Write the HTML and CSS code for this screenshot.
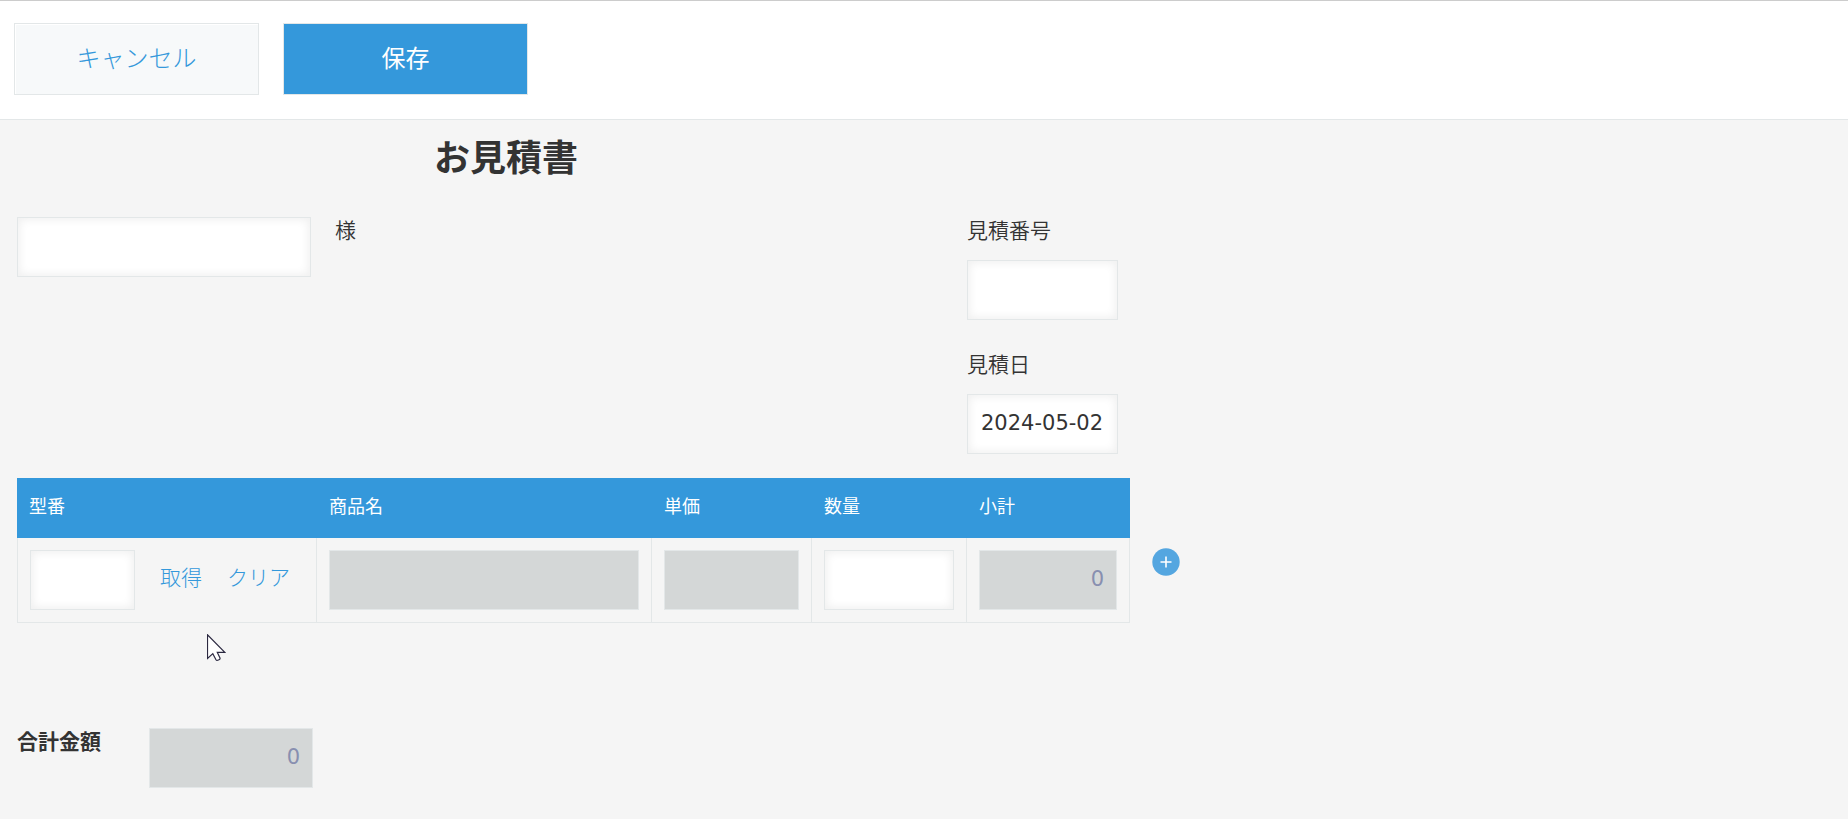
FILE: index.html
```html
<!DOCTYPE html>
<html lang="ja">
<head>
    <meta charset="UTF-8">
    <meta name="viewport" content="width=device-width, initial-scale=1.0">
    <title>お見積書</title>
    <link rel="stylesheet" href="styles.css">
</head>
<body>
    <form>
        <div class="toolbar">
            <button type="button" class="button button-cancel">キャンセル</button>
            <button type="submit" class="button button-save">保存</button>
        </div>

        <div class="record">
            <h1 class="title">お見積書</h1>

            <div class="record-head">
                <div class="customer">
                    <input class="field customer-field" type="text" id="customer" name="customer">
                    <label class="label" for="customer">様</label>
                </div>
                <div class="estimate">
                    <label class="label" for="estimate-no">見積番号</label>
                    <input class="field" type="text" id="estimate-no" name="estimate-no">
                    <label class="label" for="estimate-date">見積日</label>
                    <input class="field" type="text" id="estimate-date" name="estimate-date" value="2024-05-02">
                </div>
            </div>

            <div class="items">
                <table class="items-table">
                    <colgroup>
                        <col class="col-code">
                        <col class="col-name">
                        <col class="col-price">
                        <col class="col-count">
                        <col class="col-subtotal">
                    </colgroup>
                    <thead>
                        <tr>
                            <th scope="col">型番</th>
                            <th scope="col">商品名</th>
                            <th scope="col">単価</th>
                            <th scope="col">数量</th>
                            <th scope="col">小計</th>
                        </tr>
                    </thead>
                    <tbody>
                        <tr>
                            <td>
                                <div class="lookup">
                                    <input class="field lookup-field" type="text" name="code" aria-label="型番">
                                    <a class="link" href="#">取得</a>
                                    <a class="link" href="#">クリア</a>
                                </div>
                            </td>
                            <td><input class="field" type="text" name="name" aria-label="商品名" disabled></td>
                            <td><input class="field number" type="text" name="price" aria-label="単価" disabled></td>
                            <td><input class="field number" type="text" name="count" aria-label="数量"></td>
                            <td><input class="field number" type="text" name="subtotal" aria-label="小計" value="0" disabled></td>
                        </tr>
                    </tbody>
                </table>
                <button type="button" class="add-row" aria-label="行を追加する">
                    <svg width="28" height="28" viewBox="0 0 28 28">
                        <circle cx="14" cy="14" r="13.7" fill="#54a6e0"/>
                        <path d="M14 8.5v11M8.5 14h11" stroke="#fff" stroke-width="1.6"/>
                    </svg>
                </button>
            </div>

            <div class="total">
                <label class="label total-label" for="total">合計金額</label>
                <input class="field number total-field" type="text" id="total" name="total" value="0" disabled>
            </div>
        </div>
    </form>

    <!-- Mouse pointer -->
    <svg class="pointer" width="19" height="28" viewBox="0 0 19 28">
        <path d="M.5.8v23.6l5.3-4.8 3.2 6.2c.7 1.2 4.6 0 4-1.8l-2.7-5.6h7.5z" fill="#fff" stroke="#2b2840" stroke-width="1.2"/>
    </svg>
</body>
</html>
```
FILE: styles.css
```css
* {
    box-sizing: border-box;
}

body {
    margin: 0;
    background-color: #f5f5f5;
    color: #333;
    font-family: "Noto Sans CJK JP", sans-serif;
    font-size: 21px;
    line-height: 24px;
}

.toolbar {
    display: flex;
    gap: 24px;
    padding: 22px 14px 24px;
    border-top: 1px solid #ccc;
    border-bottom: 1px solid #e3e7e8;
    background-color: #fff;
}

.button {
    width: 245px;
    height: 72px;
    padding: 0 0 6px;
    border: 1px solid #e3e7e8;
    font-family: inherit;
    font-size: 24px;
    cursor: pointer;
}

.button-cancel {
    background-color: #f7f9fa;
    box-shadow: 1px 1px 1px #fff inset;
    color: #3498db;
    font-weight: 300;
}

.button-save {
    background-color: #3498db;
    color: #fff;
    font-weight: 400;
}

.record {
    padding: 12px 17px;
}

.title {
    max-width: 978px;
    margin: 0;
    font-size: 36px;
    line-height: 46px;
    text-align: center;
}

.record-head {
    display: flex;
    justify-content: space-between;
    max-width: 1101px;
    margin-top: 39px;
}

.label {
    font-weight: 350;
}

.field {
    display: block;
    width: 100%;
    height: 60px;
    padding: 0 12px 2px 13px;
    border: 1px solid #e3e7e8;
    border-radius: 0;
    background-color: #fff;
    box-shadow: 0 0 8px 2px #f0f0f0 inset;
    color: #333;
    font-family: "DejaVu Sans", "Noto Sans CJK JP", sans-serif;
    font-size: 21px;
}

.field:disabled {
    background-color: #d4d7d7;
    box-shadow: none;
    color: #888fb0;
}

.number {
    text-align: right;
}

.customer {
    display: flex;
    gap: 24px;
}

.customer-field {
    width: 294px;
}

.estimate {
    display: flex;
    flex-direction: column;
    gap: 19px;
    width: 151px;
}

.estimate .field {
    margin-bottom: 12px;
}

.items {
    display: flex;
    align-items: center;
    gap: 22px;
    margin-top: 12px;
}

.items-table {
    width: 1113px;
    border-spacing: 0;
    table-layout: fixed;
}

.col-code {
    width: 300px;
}

.col-name {
    width: 335px;
}

.col-price {
    width: 160px;
}

.col-count {
    width: 155px;
}

.col-subtotal {
    width: 163px;
}

.items-table th {
    height: 60px;
    padding: 0 12px 6px;
    background-color: #3498db;
    color: #fff;
    font-size: 18px;
    font-weight: 400;
    text-align: left;
}

.items-table td {
    padding: 12px;
    border-right: 1px solid #e3e7e8;
    border-bottom: 1px solid #e3e7e8;
}

.items-table td:first-child {
    border-left: 1px solid #e3e7e8;
}

.lookup {
    display: flex;
    align-items: center;
    gap: 25px;
}

.lookup-field {
    width: 105px;
}

.link {
    padding-bottom: 8px;
    color: #3498db;
    font-weight: 300;
    text-decoration: none;
}

.add-row {
    margin-top: 22px;
    padding: 0;
    border: none;
    background: none;
    line-height: 0;
    cursor: pointer;
}

.total {
    display: flex;
    gap: 48px;
    margin-top: 105px;
}

.total-label {
    font-weight: 700;
}

.total-field {
    width: 164px;
}

.pointer {
    position: absolute;
    left: 207px;
    top: 634px;
}
```
